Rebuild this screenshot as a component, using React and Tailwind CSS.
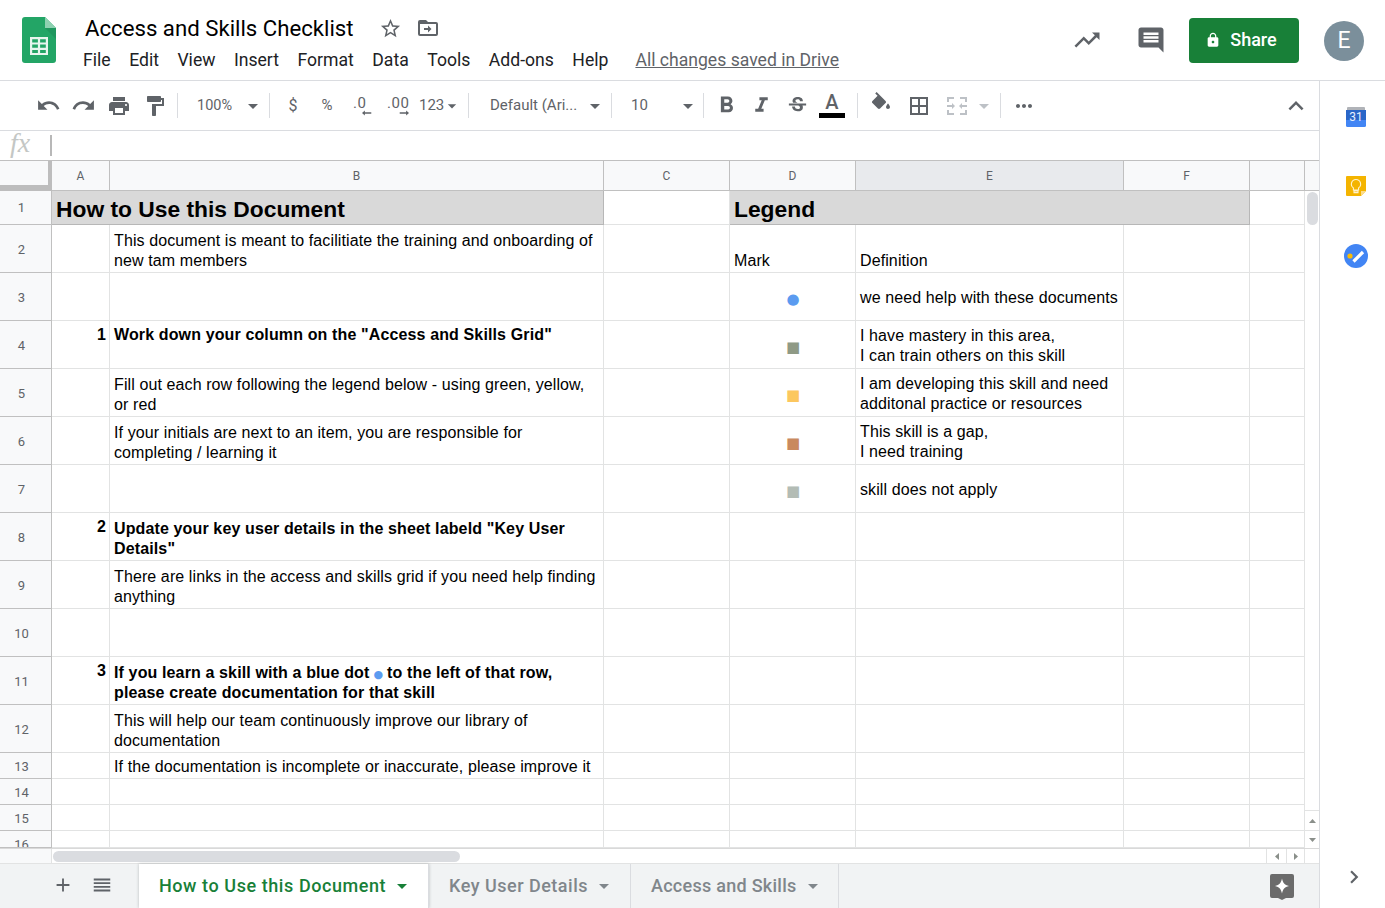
import React from 'react';
import {
  MdUndo, MdRedo, MdPrint, MdFormatPaint, MdArrowDropDown, MdFormatBold, MdFormatItalic,
  MdStrikethroughS, MdBorderAll, MdMoreHoriz, MdExpandLess, MdChevronRight,
  MdTrendingUp, MdComment, MdLock, MdStarBorder, MdAdd, MdReorder,
} from 'react-icons/md';

const gridCols = 'grid-cols-[52px_58px_494px_126px_126px_268px_126px_55px]';
const lineCol = 'border-[#e2e3e3]';

const rows = [
  { n: 2, h: 'h-[48px]', b: ['bottom', 'This document is meant to facilitiate the training and onboarding of\nnew tam members'], d: ['bottom', 'Mark'], e: ['bottom', 'Definition'] },
  { n: 3, h: 'h-[48px]', dot: '●', dotCol: 'text-[15px] text-[#5b9bf0]', e: ['mid', 'we need help with these documents'] },
  { n: 4, h: 'h-[48px]', num: '1', b: ['top', 'Work down your column on the "Access and Skills Grid"', true], dot: '■', dotCol: 'text-[15px] text-[#8f9a86]', e: ['legend', 'I have mastery in this area,\nI can train others on this skill'] },
  { n: 5, h: 'h-[48px]', b: ['bottom', 'Fill out each row following the legend below - using green, yellow,\nor red'], dot: '■', dotCol: 'text-[15px] text-[#fcc75f]', e: ['legend', 'I am developing this skill and need\nadditonal practice or resources'] },
  { n: 6, h: 'h-[48px]', b: ['bottom', 'If your initials are next to an item, you are responsible for\ncompleting / learning it'], dot: '■', dotCol: 'text-[15px] text-[#c9895f]', e: ['legend', 'This skill is a gap,\nI need training'] },
  { n: 7, h: 'h-[48px]', dot: '■', dotCol: 'text-[15px] text-[#b3bcb5]', e: ['mid', 'skill does not apply'] },
  { n: 8, h: 'h-[48px]', num: '2', b: ['bottom', 'Update your key user details in the sheet labeld "Key User\nDetails"', true] },
  { n: 9, h: 'h-[48px]', b: ['bottom', 'There are links in the access and skills grid if you need help finding\nanything'] },
  { n: 10, h: 'h-[48px]' },
  { n: 11, h: 'h-[48px]', num: '3', b: ['bottom', <>If you learn a skill with a blue dot <span className="-mx-[0.6px] text-[11px] leading-none font-normal font-['DejaVu_Sans',sans-serif] text-[#5b9bf0]">●</span> to the left of that row,{'\n'}please create documentation for that skill</>, true] },
  { n: 12, h: 'h-[48px]', b: ['bottom', 'This will help our team continuously improve our library of\ndocumentation'] },
  { n: 13, h: 'h-[26px]', b: ['mid', 'If the documentation is incomplete or inaccurate, please improve it'] },
  { n: 14, h: 'h-[26px]' },
  { n: 15, h: 'h-[26px]' },
  { n: 16, h: 'h-[17px]', last: true },
];

const alignClasses = {
  top: 'items-start pt-[4px]',
  bottom: 'items-end pb-[1px]',
  legend: 'items-end pb-[2px]',
  mid: 'items-center pt-[2px]',
};

const Cell = ({ spec, h }) => {
  const [align, text, bold] = spec || ['mid', null];
  return (
    <div className={`${h} flex ${alignClasses[align]} overflow-hidden border-r border-b ${lineCol} px-[4px] whitespace-pre-line text-[16px] leading-[20px] text-black ${bold ? 'font-bold tracking-[0.13px]' : 'tracking-[0.105px]'}`}>
      <div>{text}</div>
    </div>
  );
};

const Sep = () => <div className="w-px h-[25px] bg-[#dadce0] shrink-0" />;

const Btn = ({ w, children, className = '' }) => (
  <div className={`${w} h-[30px] shrink-0 flex items-center justify-center text-[#5f6368] ${className}`}>{children}</div>
);

const Decimal = ({ label, left }) => (
  <div className={`flex flex-col text-[15px] leading-[16px] font-['Roboto',sans-serif] tracking-[0.5px] text-[#5f6368] ${left ? 'w-[19px] ml-[5px]' : 'w-[22px] ml-[2px]'}`}>
    <span>{label}</span>
    <svg width="10" height="6" viewBox="0 0 14 8" className="-mt-[1px] self-end">
      {left
        ? <path d="M0 4l4-3.500V3h9v2H4v2.500z" fill="#5f6368" />
        : <path d="M14 4l-4-3.500V3H1v2h9v2.500z" fill="#5f6368" />}
    </svg>
  </div>
);

const SheetsLogo = () => (
  <svg width="34" height="46" viewBox="0 0 34 46" className="shrink-0">
    <path d="M3 0h20l11 11v32a3 3 0 0 1-3 3H3a3 3 0 0 1-3-3V3a3 3 0 0 1 3-3z" fill="#23a566" />
    <path d="M23 0l11 11H23z" fill="#8ed1b1" />
    <path d="M23 11l11 11V11z" fill="#1c8a55" opacity="0.5" />
    <path d="M8 20h18v18H8zM10.200 22.200v3.200h5.700v-3.200zm7.900 0v3.200h5.700v-3.200zm-7.900 5.400v3.200h5.700v-3.200zm7.900 0v3.200h5.700v-3.200zm-7.900 5.400v3h5.700v-3zm7.900 0v3h5.700v-3z" fill="#e8f5ee" fillRule="evenodd" />
  </svg>
);

const FillIcon = () => (
  <svg width="24" height="24" viewBox="0 0 24 24" fill="#5f6368">
    <path d="M16.560 8.940L7.620 0 6.210 1.410l2.380 2.380-5.150 5.150c-.59.59-.59 1.540 0 2.120l5.500 5.500c.29.290.68.440 1.060.440s.77-.150 1.060-.440l5.500-5.500c.59-.58.59-1.530 0-2.120zM19 11.500s-2 2.170-2 3.500c0 1.100.9 2 2 2s2-.9 2-2c0-1.330-2-3.500-2-3.500z" />
  </svg>
);

const CalendarIcon = () => (
  <svg width="22" height="22" viewBox="0 0 22 22">
    <rect x="2" y="1" width="18" height="4" rx="1" fill="#b0b3b8" />
    <rect x="1" y="4" width="20" height="17" rx="1.500" fill="#4285f4" />
    <rect x="1" y="4" width="20" height="10" fill="#2a66c8" />
    <text x="11" y="15" textAnchor="middle" fontSize="12" fill="#e8f0fe" fontFamily="Roboto, sans-serif">31</text>
  </svg>
);

const KeepIcon = () => (
  <svg width="22" height="22" viewBox="0 0 22 22">
    <path d="M2 1h19v15l-5 5H2a1 1 0 0 1-1-1V2a1 1 0 0 1 1-1z" fill="#f4b400" />
    <path d="M16 21v-5h5z" fill="#fbdc8a" />
    <path d="M11 4.500a4.600 4.600 0 0 0-2.600 8.400V15h5.200v-2.100A4.600 4.600 0 0 0 11 4.500zM9 16h4v1.600H9z" fill="none" stroke="#fff3cf" strokeWidth="1.100" />
  </svg>
);

const TasksIcon = () => (
  <svg width="24" height="24" viewBox="0 0 24 24">
    <circle cx="12" cy="12" r="12" fill="#4285f4" />
    <path d="M9.500 17.500L19 8" stroke="#fff" strokeWidth="3.200" />
    <circle cx="6" cy="12" r="2.600" fill="#fbbc04" />
  </svg>
);

const ExploreIcon = () => (
  <svg width="24" height="26" viewBox="0 0 24 26">
    <path d="M2 0h20a2 2 0 0 1 2 2v20a2 2 0 0 1-2 2h-6l-4 2-4-2H2a2 2 0 0 1-2-2V2a2 2 0 0 1 2-2z" fill="#6b6b6b" />
    <path d="M12 4.500c.9 4.100 2.400 6.600 7 7.500-4.600.9-6.100 3.400-7 7.500-.9-4.100-2.400-6.600-7-7.500 4.600-.9 6.100-3.400 7-7.500z" fill="#fff" />
  </svg>
);

const MergeIcon = () => (
  <svg width="20" height="18" viewBox="0 0 20 18" fill="#bdc1c6">
    <path d="M0 0h7v2H2v3H0zM13 0h7v5h-2V2h-5zM0 13h2v3h5v2H0zM18 13h2v5h-7v-2h5zM0 8h5V6l3 3-3 3v-2H0zM20 8h-5V6l-3 3 3 3v-2h5z" />
  </svg>
);

const Tab = ({ label, active, w, track }) => (
  <div className={`${w} ${track} h-full shrink-0 flex items-center pl-[20px] gap-[4px] border-r border-[#dadce0] text-[18px] font-medium font-['Roboto',sans-serif] ${active ? 'bg-white text-[#188038] shadow-[0_0_3px_rgba(60,64,67,0.3)]' : 'text-[#80868b]'}`}>
    <span className="pb-[2px]">{label}</span>
    <MdArrowDropDown size={24} />
  </div>
);

export default function App() {
  return (
    <div className="w-[1385px] h-[908px] overflow-hidden bg-white flex flex-col font-['Liberation_Sans',Arial,sans-serif]">
      {/* top bar */}
      <div className="h-[81px] shrink-0 border-b border-[#dadce0] flex items-start font-['Roboto',sans-serif]">
        <div className="pl-[22px] pt-[17px] w-[83px] shrink-0"><SheetsLogo /></div>
        <div className="flex-1 pt-[12px]">
          <div className="flex items-center h-[32px] pl-[2px]">
            <span className="text-[22.200px] leading-[32px] text-[#000]">Access and Skills Checklist</span>
            <MdStarBorder size={23} className="ml-[25px] text-[#5f6368]" />
            <svg width="20" height="16" viewBox="0 0 20 16" className="ml-[16px] -mt-[1px]" fill="#5f6368">
              <path d="M2 0h6l2 2h8a2 2 0 0 1 2 2v10a2 2 0 0 1-2 2H2a2 2 0 0 1-2-2V2a2 2 0 0 1 2-2zm0 4v10h16V4zM10 5.500L13.500 9 10 12.500V10H6V8h4z" fillRule="evenodd" />
            </svg>
          </div>
          <div className="flex items-center h-[26px] mt-[3px] text-[17.600px] text-[#202124]">
            <span>File</span>
            <span className="ml-[18.500px]">Edit</span>
            <span className="ml-[18.500px]">View</span>
            <span className="ml-[18.500px]">Insert</span>
            <span className="ml-[18.500px]">Format</span>
            <span className="ml-[18.500px]">Data</span>
            <span className="ml-[18.500px]">Tools</span>
            <span className="ml-[18.500px]">Add-ons</span>
            <span className="ml-[18.500px]">Help</span>
            <span className="ml-[27px] text-[#5f6368] underline">All changes saved in Drive</span>
          </div>
        </div>
        <div className="flex items-center pt-[18px] pr-[21px]">
          <MdTrendingUp size={30} className="text-[#5f6368] mr-[34px] -mt-[2px]" />
          <MdComment size={30} className="text-[#5f6368] mr-[23px] -mt-[2px]" />
          <div className="w-[110px] h-[45px] pr-[6px] pb-[2px] rounded-[4px] bg-[#188038] flex items-center justify-center gap-[9px] text-white text-[18px] font-medium">
            <MdLock size={16} />
            <span>Share</span>
          </div>
          <div className="ml-[25px] w-[40px] h-[40px] pt-[1px] rounded-full bg-[#7b8f9b] flex items-center justify-center text-white text-[23px]">E</div>
        </div>
      </div>

      <div className="flex-1 flex min-h-0">
        <div className="w-[1319px] shrink-0 flex flex-col">
          {/* toolbar */}
          <div className="h-[50px] shrink-0 border-b border-[#dadce0] flex items-center pl-[30px] text-[#5f6368] font-['Roboto',sans-serif]">
            <Btn w="w-[36px]"><MdUndo size={25} /></Btn>
            <Btn w="w-[35px]"><MdRedo size={25} /></Btn>
            <Btn w="w-[35px]"><MdPrint size={24} /></Btn>
            <Btn w="w-[37px]"><MdFormatPaint size={24} /></Btn>
            <div className="w-[4px]" />
            <Sep />
            <div className="w-[91px] flex items-center text-[14.500px] pl-[19px]">
              <span>100%</span>
              <MdArrowDropDown size={24} className="ml-[9px]" />
            </div>
            <Sep />
            <Btn w="w-[46px]" className="text-[16px]">$</Btn>
            <Btn w="w-[22px]" className="text-[15px]">%</Btn>
            <Btn w="w-[44px]"><Decimal label=".0" left /></Btn>
            <Btn w="w-[30px]"><Decimal label=".00" /></Btn>
            <div className="flex items-center w-[56px] pl-[7px] text-[15px]">
              <span>123</span>
              <MdArrowDropDown size={20} className="-ml-[2px]" />
            </div>
            <Sep />
            <div className="w-[142px] flex items-center pl-[21px] text-[15px]">
              <span>Default (Ari...</span>
              <MdArrowDropDown size={24} className="ml-[6px]" />
            </div>
            <Sep />
            <div className="w-[91px] flex items-center pl-[19px] text-[15px]">
              <span>10</span>
              <MdArrowDropDown size={24} className="ml-[28px]" />
            </div>
            <Sep />
            <Btn w="w-[44px]"><MdFormatBold size={27} /></Btn>
            <Btn w="w-[27px]"><MdFormatItalic size={25} /></Btn>
            <Btn w="w-[44px]"><MdStrikethroughS size={23} /></Btn>
            <div className="w-[26px] shrink-0 flex flex-col items-center text-[20px] leading-[20px] font-medium">
              <span className="-mt-[2px]">A</span>
              <div className="w-[26px] h-[5px] mt-[1px] bg-black" />
            </div>
            <div className="w-[12px]" />
            <Sep />
            <Btn w="w-[46px]" className="pb-[4px]"><FillIcon /></Btn>
            <Btn w="w-[30px]"><MdBorderAll size={24} /></Btn>
            <Btn w="w-[46px]"><MergeIcon /></Btn>
            <Btn w="w-[8px]" className="text-[#bdc1c6]"><MdArrowDropDown size={24} className="shrink-0" /></Btn>
            <div className="w-[12px]" />
            <Sep />
            <Btn w="w-[45px]"><MdMoreHoriz size={24} /></Btn>
            <div className="flex-1" />
            <Btn w="w-[30px]" className="mr-[8px]"><MdExpandLess size={30} /></Btn>
          </div>

          {/* formula bar */}
          <div className="h-[30px] shrink-0 border-b border-[#c0c0c0] flex items-center">
            <span className="w-[50px] pl-[10px] -mt-[6px] text-[28px] leading-[28px] italic text-[#c4c7c5] font-['Liberation_Serif',serif]">fx</span>
            <div className="w-[2px] h-[21px] bg-[#b8b8b8]" />
          </div>

          {/* sheet */}
          <div className="flex-1 min-h-0 flex">
            <div className="w-[1305px] shrink-0 overflow-hidden">
              <div className={`grid ${gridCols} bg-[#f8f9fa] text-[12px] text-[#5f6368] font-['Roboto',sans-serif]`}>
                <div className="h-[30px] border-r-[4px] border-b-[6px] border-[#bdbdbd]" />
                {['A', 'B', 'C', 'D', 'E', 'F', ''].map((c) => (
                  <div key={c} className={`h-[30px] flex items-center justify-center border-r border-b border-[#c0c0c0] ${c === 'E' ? 'bg-[#e8eaed]' : ''}`}>{c}</div>
                ))}
              </div>
              <div className={`grid ${gridCols}`}>
                <div className="h-[34px] flex items-center justify-center pr-[8px] bg-[#f8f9fa] border-r border-b border-[#c0c0c0] text-[13px] text-[#5f6368] font-['Roboto',sans-serif]">1</div>
                <div className="col-span-2 h-[34px] flex items-center pt-[3px] px-[4px] bg-[#d9d9d9] border-r border-b border-[#b7b7b7] text-[22.800px] font-bold text-black">How to Use this Document</div>
                <div className={`h-[34px] border-r border-b ${lineCol}`} />
                <div className="col-span-3 h-[34px] flex items-center pt-[3px] px-[4px] bg-[#d9d9d9] border-r border-b border-[#b7b7b7] text-[22.800px] font-bold text-black">Legend</div>
                <div className={`h-[34px] border-r border-b ${lineCol}`} />
                {rows.map((r) => (
                  <React.Fragment key={r.n}>
                    <div className={`${r.h} overflow-hidden flex ${r.last ? 'items-start' : 'items-center pt-[2px]'} justify-center pr-[8px] bg-[#f8f9fa] border-r border-b border-[#c0c0c0] text-[13px] ${r.last ? 'leading-[28px]' : ''} text-[#5f6368] font-['Roboto',sans-serif]`}>{r.n}</div>
                    <div className={`${r.h} flex items-start justify-end pt-[4px] pr-[3px] border-r border-b ${lineCol} text-[16px] leading-[20px] font-bold text-black`}>{r.num}</div>
                    <Cell spec={r.b} h={r.h} />
                    <Cell h={r.h} />
                    {r.dot ? (
                      <div className={`${r.h} flex items-center justify-center pt-[5px] pl-[1px] border-r border-b ${lineCol} font-['DejaVu_Sans',sans-serif] ${r.dotCol}`}>{r.dot}</div>
                    ) : (
                      <Cell spec={r.d} h={r.h} />
                    )}
                    <Cell spec={r.e} h={r.h} />
                    <Cell h={r.h} />
                    <Cell h={r.h} />
                  </React.Fragment>
                ))}
              </div>
            </div>
            {/* vertical scrollbar */}
            <div className="flex-1 flex flex-col items-stretch">
              <div className="h-[30px] bg-[#f8f9fa] border-b border-[#c0c0c0]" />
              <div className="w-[11px] h-[33px] mt-[1px] ml-[2px] rounded-[6px] bg-[#dadce0]" />
              <div className="flex-1" />
              <div className="h-[20px] flex items-center justify-center border-t border-[#e2e3e3] text-[#8a8f8a]">
                <svg width="7" height="4" viewBox="0 0 7 4"><path d="M3.500 0L7 4H0z" fill="currentColor" /></svg>
              </div>
              <div className="h-[18px] flex items-center justify-center border-t border-[#e2e3e3] text-[#8a8f8a]">
                <svg width="7" height="4" viewBox="0 0 7 4"><path d="M3.500 4L7 0H0z" fill="currentColor" /></svg>
              </div>
            </div>
          </div>

          {/* horizontal scrollbar */}
          <div className="h-[15px] shrink-0 border-t border-[#d9d9d9] flex items-center bg-white">
            <div className="w-[52px] h-full bg-[#f8f9fa] border-r border-[#e2e3e3]" />
            <div className="w-[407px] h-[11px] ml-[1px] rounded-[6px] bg-[#dadce0]" />
            <div className="flex-1" />
            <div className="w-[20px] h-full flex items-center justify-center border-l border-[#e2e3e3]">
              <svg width="4" height="7" viewBox="0 0 4 7"><path d="M0 3.500L4 0v7z" fill="#8a8f8a" /></svg>
            </div>
            <div className="w-[19px] h-full flex items-center justify-center border-l border-r border-[#e2e3e3]">
              <svg width="4" height="7" viewBox="0 0 4 7"><path d="M4 3.500L0 0v7z" fill="#8a8f8a" /></svg>
            </div>
            <div className="w-[14px]" />
          </div>

          {/* sheet tabs */}
          <div className="h-[45px] shrink-0 bg-[#f1f3f4] border-t border-[#e2e3e3] flex items-center">
            <MdAdd size={22} className="ml-[52px] -mt-[2px] text-[#5f6368]" />
            <MdReorder size={22} className="ml-[17px] -mt-[2px] text-[#5f6368]" />
            <div className="w-[26px]" />
            <Tab label="How to Use this Document" active w="w-[290px]" track="tracking-[0.57px]" />
            <Tab label="Key User Details" w="w-[202px]" track="tracking-[0.5px]" />
            <Tab label="Access and Skills" w="w-[208px]" track="tracking-[0.27px]" />
            <div className="flex-1" />
            <div className="mr-[25px] mt-[1px]"><ExploreIcon /></div>
          </div>
        </div>

        {/* side panel */}
        <div className="flex-1 border-l border-[#dadce0] flex flex-col items-center pt-[25px] pl-[6px]">
          <CalendarIcon />
          <div className="mt-[47px]"><KeepIcon /></div>
          <div className="mt-[47px]"><TasksIcon /></div>
          <div className="flex-1" />
          <MdChevronRight size={26} className="text-[#5f6368] mb-[18px] mr-[4px]" />
        </div>
      </div>
    </div>
  );
}
